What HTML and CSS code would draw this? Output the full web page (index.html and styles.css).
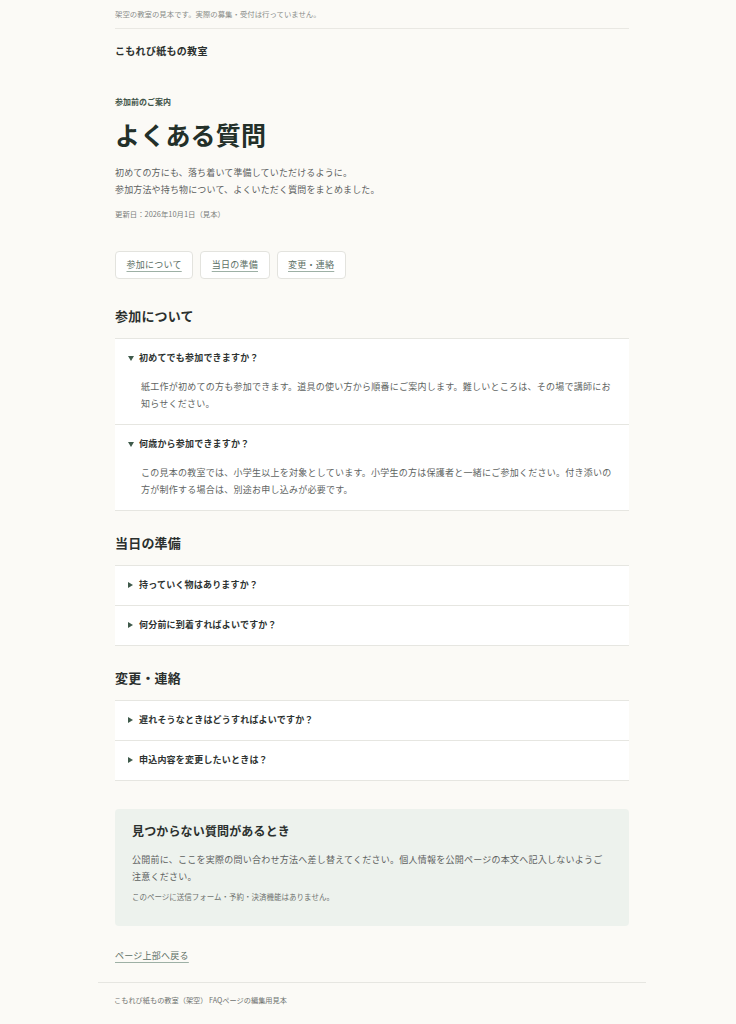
FILE: index.html
```html
<!DOCTYPE html>
<html lang="ja">
<head>
<meta charset="utf-8">
<title>よくある質問 | こもれび紙もの教室</title>
<link rel="stylesheet" href="styles.css">
</head>
<body>
<header class="site-header">
  <p class="notice">架空の教室の見本です。実際の募集・受付は行っていません。</p>
  <p class="brand">こもれび紙もの教室</p>
</header>
<main class="main" id="top">
  <section class="intro">
    <p class="eyebrow">参加前のご案内</p>
    <h1 class="title">よくある質問</h1>
    <p class="lead">初めての方にも、落ち着いて準備していただけるように。<br>参加方法や持ち物について、よくいただく質問をまとめました。</p>
    <p class="updated">更新日：2026年10月1日（見本）</p>
  </section>
  <nav class="toc">
    <a class="toc-link" href="#join">参加について</a>
    <a class="toc-link" href="#prep">当日の準備</a>
    <a class="toc-link" href="#change">変更・連絡</a>
  </nav>
  <section class="faq-section" id="join">
    <h2 class="section-title">参加について</h2>
    <div class="faq-list">
      <details class="faq" open>
        <summary class="faq-q">初めてでも参加できますか？</summary>
        <p class="faq-a">紙工作が初めての方も参加できます。道具の使い方から順番にご案内します。難しいところは、その場で講師にお知らせください。</p>
      </details>
      <details class="faq" open>
        <summary class="faq-q">何歳から参加できますか？</summary>
        <p class="faq-a">この見本の教室では、小学生以上を対象としています。小学生の方は保護者と一緒にご参加ください。付き添いの方が制作する場合は、別途お申し込みが必要です。</p>
      </details>
    </div>
  </section>
  <section class="faq-section" id="prep">
    <h2 class="section-title">当日の準備</h2>
    <div class="faq-list">
      <details class="faq">
        <summary class="faq-q">持っていく物はありますか？</summary>
        <p class="faq-a">必要な道具と材料は教室で用意します。汚れてもよい服装でお越しください。</p>
      </details>
      <details class="faq">
        <summary class="faq-q">何分前に到着すればよいですか？</summary>
        <p class="faq-a">開始の10分前を目安にお越しください。</p>
      </details>
    </div>
  </section>
  <section class="faq-section" id="change">
    <h2 class="section-title">変更・連絡</h2>
    <div class="faq-list">
      <details class="faq">
        <summary class="faq-q">遅れそうなときはどうすればよいですか？</summary>
        <p class="faq-a">公開前に、実際の連絡方法へ差し替えてください。</p>
      </details>
      <details class="faq">
        <summary class="faq-q">申込内容を変更したいときは？</summary>
        <p class="faq-a">公開前に、実際の変更方法へ差し替えてください。</p>
      </details>
    </div>
  </section>
  <aside class="contact">
    <h3 class="contact-title">見つからない質問があるとき</h3>
    <p class="contact-text">公開前に、ここを実際の問い合わせ方法へ差し替えてください。個人情報を公開ページの本文へ記入しないようご注意ください。</p>
    <p class="contact-note">このページに送信フォーム・予約・決済機能はありません。</p>
  </aside>
  <p class="back"><a class="back-link" href="#top">ページ上部へ戻る</a></p>
</main>
<footer class="site-footer">
  <p class="footer-text">こもれび紙もの教室（架空）&nbsp;FAQページの編集用見本</p>
</footer>
</body>
</html>
```
FILE: styles.css
```css
* { box-sizing: border-box; }
html, body { margin: 0; }
body {
  padding: 0 0 0 8px;
  background: #fbfaf6;
  color: #2e3331;
  font-family: "Noto Sans CJK JP", "Noto Sans", sans-serif;
}
p, h1, h2, h3 { margin: 0; }

.site-header, .main { width: 514px; margin: 0 auto; }

.notice {
  padding: 7px 0 8px;
  font-size: 7.4px;
  line-height: 13px;
  color: #8a8d8a;
  border-bottom: 1px solid #e9e8e3;
}
.brand {
  padding-top: 15px;
  font-size: 10px;
  letter-spacing: 0.3px;
  line-height: 14px;
  font-weight: 700;
  color: #2b302e;
}

.intro { padding-top: 37px; }
.eyebrow {
  font-size: 8px;
  line-height: 14px;
  font-weight: 700;
  color: #3f5448;
}
.title {
  margin-top: 7px;
  font-size: 25px;
  line-height: 36px;
  font-weight: 700;
  color: #233029;
  letter-spacing: 0.2px;
}
.lead {
  margin-top: 12px;
  font-size: 9px;
  letter-spacing: 0.15px;
  line-height: 17px;
  color: #5d615f;
}
.updated {
  margin-top: 10px;
  font-size: 7.4px;
  line-height: 12px;
  color: #7a7d7b;
}

.toc {
  display: flex;
  gap: 7px;
  margin-top: 31px;
}
.toc-link {
  display: block;
  height: 28px;
  padding: 0 10.5px;
  line-height: 26px;
  font-size: 9px;
  letter-spacing: 0.25px;
  color: #5c6f65;
  text-decoration: underline;
  text-decoration-color: #9db0a5;
  text-underline-offset: 3px;
  background: #fff;
  border: 1px solid #e3e3de;
  border-radius: 4px;
}

.faq-section { margin-top: 27px; }
.faq-section + .faq-section { margin-top: 22px; }
.section-title {
  font-size: 13px;
  line-height: 20px;
  font-weight: 700;
  letter-spacing: 0.2px;
  color: #2b302e;
}
.faq-list {
  margin-top: 12px;
  border-bottom: 1px solid #e6e6e1;
}
.faq {
  background: #fff;
  border-top: 1px solid #e6e6e1;
}
.faq-q {
  display: flex;
  align-items: center;
  gap: 5px;
  padding: 12px 14px 13px 13px;
  font-size: 9px;
  letter-spacing: 0.2px;
  line-height: 14px;
  font-weight: 700;
  color: #2e3331;
  list-style: none;
  cursor: pointer;
}
.faq-q::-webkit-details-marker { display: none; }
.faq-q::before {
  content: "";
  width: 0;
  height: 0;
  border-left: 5px solid #3f5a4b;
  border-top: 3px solid transparent;
  border-bottom: 3px solid transparent;
  margin-right: 1px;
}
.faq[open] > .faq-q::before {
  border-top: 5px solid #3f5a4b;
  border-left: 3px solid transparent;
  border-right: 3px solid transparent;
  border-bottom: 0;
  margin-right: 0;
}
.faq-a {
  padding: 0 14px 12px 26px;
  font-size: 9px;
  letter-spacing: 0.25px;
  line-height: 17px;
  color: #606462;
}

.contact {
  margin-top: 28px;
  padding: 13px 20px 23px 17px;
  background: #edf2ed;
  border-radius: 4px;
}
.contact-title {
  font-size: 12px;
  letter-spacing: 0.15px;
  line-height: 18px;
  font-weight: 700;
  color: #2b302e;
}
.contact-text {
  margin-top: 11px;
  font-size: 9px;
  letter-spacing: 0.25px;
  line-height: 17px;
  color: #5d615f;
}
.contact-note {
  margin-top: 6px;
  font-size: 7.5px;
  line-height: 12px;
  color: #6f7370;
}

.back { margin-top: 19px; line-height: 14px; }
.back-link {
  font-size: 9px;
  letter-spacing: 0.25px;
  color: #5c6f65;
  text-decoration: underline;
  text-decoration-color: #9db0a5;
  text-underline-offset: 3px;
}

.site-footer {
  width: 548px;
  margin: 19px auto 0;
  border-top: 1px solid #e6e6e1;
  padding: 11px 0 24px 16px;
}
.footer-text {
  font-size: 7.2px;
  line-height: 12px;
  color: #6f7370;
}
```
